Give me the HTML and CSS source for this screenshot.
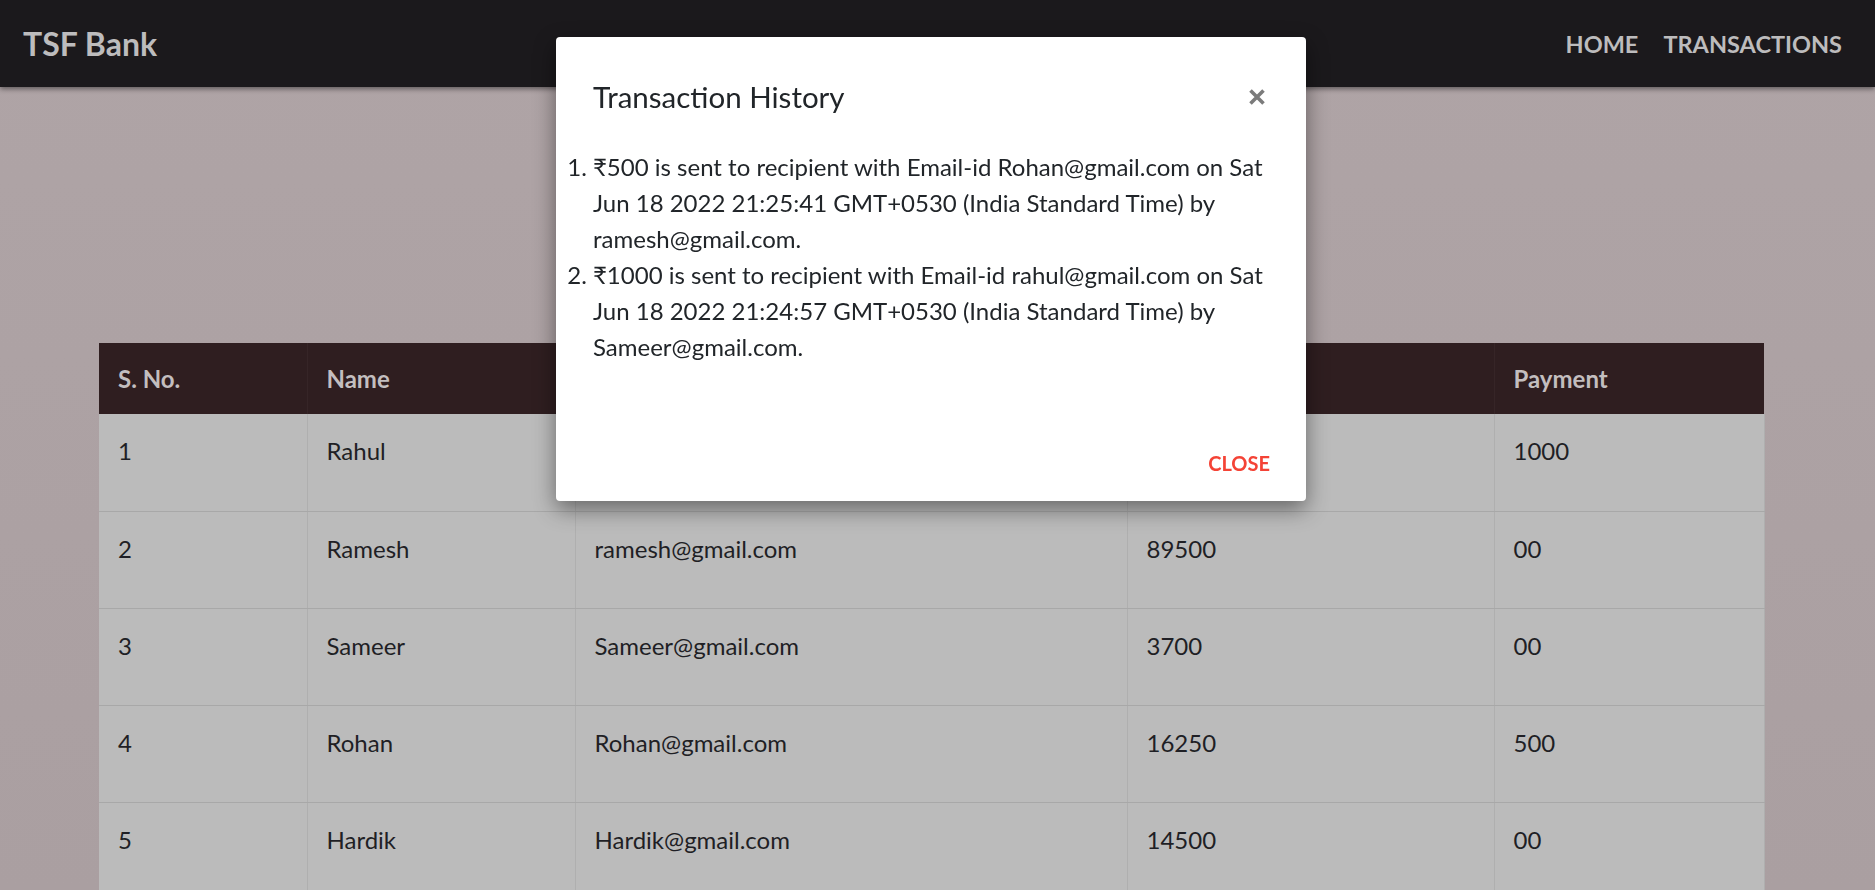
FILE: index.html
```html
<!DOCTYPE html>
<html>
<head>
<meta charset="utf-8">
<title>TSF Bank</title>
<link rel="stylesheet" href="styles.css">
</head>
<body>
<nav class="navbar">
  <a class="brand" href="#">TSF Bank</a>
  <div class="nav-links">
    <a href="#">HOME</a>
    <a href="#">TRANSACTIONS</a>
  </div>
</nav>

<main class="content">
  <table class="customers">
    <colgroup>
      <col class="c1"><col class="c2"><col class="c3"><col class="c4"><col class="c5">
    </colgroup>
    <thead>
      <tr><th>S. No.</th><th>Name</th><th>Email</th><th>Balance</th><th>Payment</th></tr>
    </thead>
    <tbody>
      <tr><td>1</td><td>Rahul</td><td>rahul@gmail.com</td><td></td><td>1000</td></tr>
      <tr><td>2</td><td>Ramesh</td><td>ramesh@gmail.com</td><td>89500</td><td>00</td></tr>
      <tr><td>3</td><td>Sameer</td><td>Sameer@gmail.com</td><td>3700</td><td>00</td></tr>
      <tr><td>4</td><td>Rohan</td><td>Rohan@gmail.com</td><td>16250</td><td>500</td></tr>
      <tr><td>5</td><td>Hardik</td><td>Hardik@gmail.com</td><td>14500</td><td>00</td></tr>
    </tbody>
  </table>
</main>

<div class="modal">
  <div class="modal-header">
    <h5 class="modal-title">Transaction History</h5>
    <button class="close-x" aria-label="Close">
      <svg width="18" height="18" viewBox="0 0 18 18"><path d="M2.5 2.5 L15.5 15.5 M15.5 2.5 L2.5 15.5" stroke="#7b7b7b" stroke-width="3.6" stroke-linecap="butt" fill="none"/></svg>
    </button>
  </div>
  <div class="modal-body">
    <ol class="history">
      <li>₹500 is sent to recipient with Email-id Rohan@gmail.com on Sat Jun 18 2022 21:25:41 GMT+0530 (India Standard Time) by ramesh@gmail.com.</li>
      <li>₹1000 is sent to recipient with Email-id rahul@gmail.com on Sat Jun 18 2022 21:24:57 GMT+0530 (India Standard Time) by Sameer@gmail.com.</li>
    </ol>
  </div>
  <div class="modal-footer">
    <button class="btn-close">CLOSE</button>
  </div>
</div>
</body>
</html>
```
FILE: styles.css
```css
html, body { height: 100%; }
body {
  margin: 0;
  overflow: hidden;
  background: linear-gradient(180deg, #afa4a6 0%, #aa9fa1 100%);
  font-family: "Lato", "Noto Sans", sans-serif;
  color: #212529;
}

.navbar {
  height: 87px;
  box-sizing: border-box;
  background: #1b191c;
  display: flex;
  align-items: center;
  justify-content: space-between;
  padding: 0 33px 0 23px;
  box-shadow: 0 2px 5px rgba(0, 0, 0, 0.45);
  position: relative;
  z-index: 1;
}
.brand {
  color: #bdbcbd;
  font-weight: 700;
  font-size: 32px;
  text-decoration: none;
}
.nav-links { display: flex; gap: 25px; }
.nav-links a {
  color: #bdbcbd;
  font-weight: 700;
  font-size: 23.5px;
  text-decoration: none;
}

.content {
  padding: 256px 0 0 99px;
}
.customers {
  width: 1665px;
  border-collapse: collapse;
  table-layout: fixed;
  font-size: 24px;
}
.c1 { width: 208px; }
.c2 { width: 268px; }
.c3 { width: 552px; }
.c4 { width: 367px; }
.c5 { width: 270px; }

.customers th {
  height: 71px;
  box-sizing: border-box;
  background: #2f1e20;
  color: #c3bebf;
  font-weight: 700;
  text-align: left;
  padding: 0 19px;
  border-right: 1px solid #362527;
}
.customers th:last-child { border-right: none; }
.customers td {
  height: 97px;
  box-sizing: border-box;
  background: #bbbbbb;
  color: #1f1f25;
  vertical-align: top;
  padding: 19px 19px 0;
  line-height: 36px;
  border-right: 1px solid #afafaf;
  border-bottom: 1px solid #a8a8a8;
}

.modal {
  position: fixed;
  left: 556px;
  top: 37px;
  width: 750px;
  height: 464px;
  background: #fff;
  border-radius: 4px;
  box-shadow: 0 8px 22px rgba(0, 0, 0, 0.45);
  display: flex;
  flex-direction: column;
  z-index: 10;
}
.modal-header {
  display: flex;
  align-items: center;
  justify-content: space-between;
  padding: 37px 40px 0 37px;
}
.modal-title {
  margin: 0;
  font-size: 29.5px;
  font-weight: 400;
  line-height: 45px;
  color: #212529;
}
.close-x {
  border: none;
  background: none;
  padding: 0;
  width: 18px;
  height: 18px;
  display: flex;
  cursor: pointer;
}
.modal-body {
  flex: 1;
  padding: 30px 21px 0 37px;
}
.history {
  margin: 0;
  padding: 0;
  font-size: 24px;
  line-height: 36px;
  color: #212529;
}
.modal-footer {
  display: flex;
  justify-content: flex-end;
  padding: 0 36px 25px;
}
.btn-close {
  border: none;
  background: none;
  padding: 0;
  font-family: inherit;
  font-size: 20px;
  font-weight: 700;
  line-height: 26px;
  color: #f44336;
  cursor: pointer;
}
```
